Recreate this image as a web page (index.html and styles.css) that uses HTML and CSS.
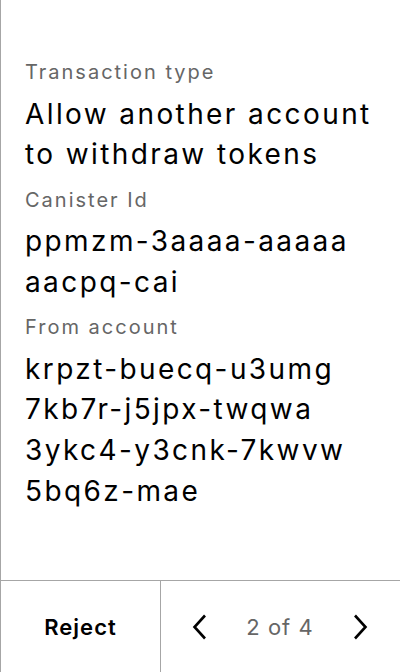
FILE: index.html
```html
<!DOCTYPE html>
<html>
<head>
<meta charset="utf-8">
<link rel="stylesheet" href="styles.css">
</head>
<body>
<div class="screen">
  <main class="content">
    <div class="field">
      <div class="label">Transaction type</div>
      <div class="value">Allow another account to withdraw tokens</div>
    </div>
    <div class="field">
      <div class="label">Canister Id</div>
      <div class="value">ppmzm-3aaaa-aaaaa aacpq-cai</div>
    </div>
    <div class="field">
      <div class="label">From account</div>
      <div class="value">krpzt-buecq-u3umg 7kb7r-j5jpx-twqwa 3ykc4-y3cnk-7kwvw 5bq6z-mae</div>
    </div>
  </main>
  <footer class="footer">
    <div class="reject">Reject</div>
    <div class="pager">
      <svg class="chev" width="16" height="26" viewBox="0 0 16 26"><path d="M13 1.5 L2.5 13 L13 24.5" fill="none" stroke="#000" stroke-width="2.6"/></svg>
      <span class="count">2 of 4</span>
      <svg class="chev" width="16" height="26" viewBox="0 0 16 26"><path d="M3 1.5 L13.5 13 L3 24.5" fill="none" stroke="#000" stroke-width="2.6"/></svg>
    </div>
  </footer>
</div>
</body>
</html>
```
FILE: styles.css
```css
html, body {
  margin: 0;
  padding: 0;
  background: #fff;
}
body {
  font-family: Inter, "Noto Sans", sans-serif;
  color: #000;
}
.screen {
  width: 400px;
  height: 672px;
  box-sizing: border-box;
  border-left: 1px solid #a6a6a6;
  display: flex;
  flex-direction: column;
}
.content {
  flex: 1;
  padding: 60px 24px 0 24px;
}
.field + .field {
  margin-top: 12.7px;
}
.label {
  font-size: 20px;
  line-height: 24px;
  color: #666;
  letter-spacing: 2px;
}
.value {
  margin-top: 9.7px;
  font-size: 28px;
  line-height: 40.6px;
  font-weight: 400;
  letter-spacing: 2.4px;
}
.footer {
  height: 92px;
  box-sizing: border-box;
  border-top: 1px solid #a6a6a6;
  display: flex;
}
.reject {
  width: 159px;
  border-right: 1px solid #a6a6a6;
  display: flex;
  align-items: center;
  justify-content: center;
  font-size: 22px;
  font-weight: 600;
  letter-spacing: 1px;
}
.pager {
  flex: 1;
  display: flex;
  align-items: center;
  justify-content: space-between;
  padding: 0 32px 0 31px;
}
.count {
  font-size: 22px;
  color: #666;
  letter-spacing: 1px;
}
.chev {
  display: block;
}
```
